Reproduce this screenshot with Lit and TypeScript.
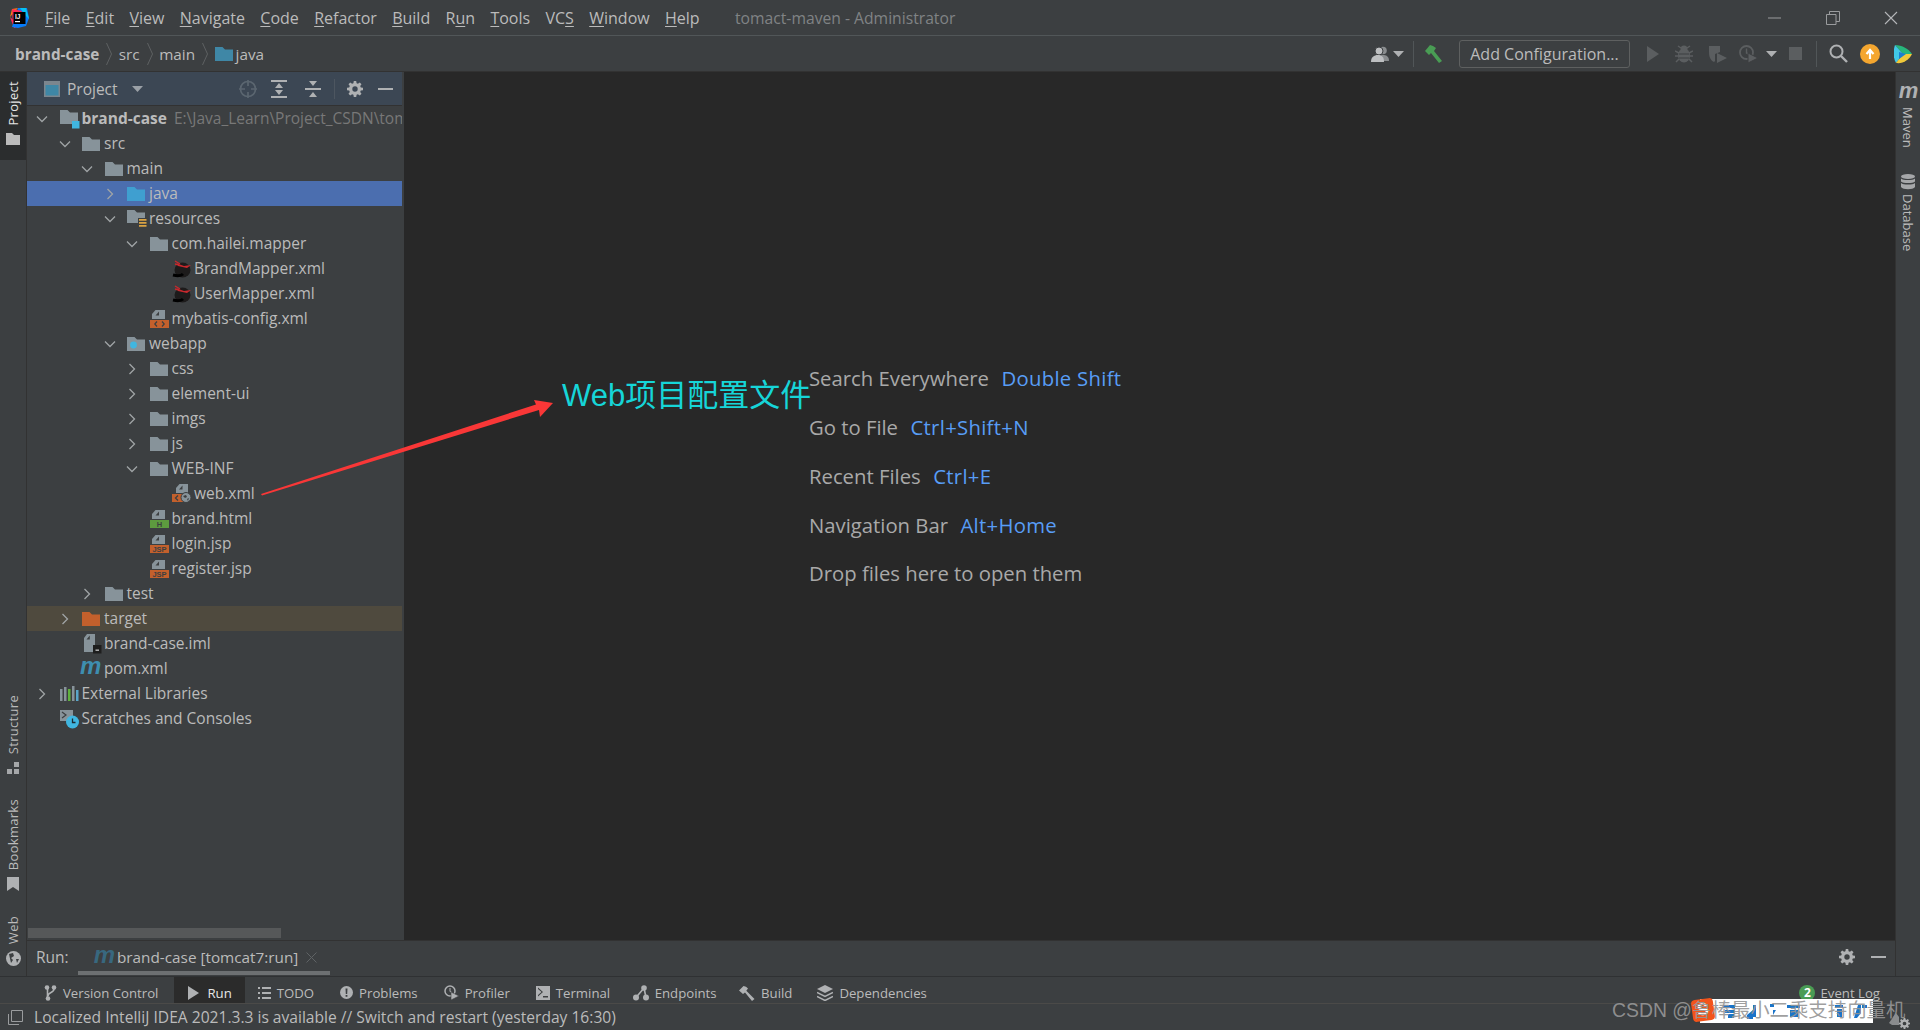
import { LitElement, html, svg, css } from "lit";
import { customElement } from "lit/decorators.js";

const svgBox = (w: number, h: number, body: any, cls = "") =>
  html`<svg class=${cls} width=${w} height=${h} viewBox="0 0 ${w} ${h}" xmlns="http://www.w3.org/2000/svg">${body}</svg>`;

const G = "#87939a";
const folder = (c = G) => html`<svg width="18" height="16" viewBox="0 0 18 16"><path d="M0 1h7.500l2.500 2.500h8V15H0z" fill=${c}/></svg>`;
const page = svg`<path d="M5.500 0H15v9H2V4z M9 1.500 5.500 5.500H9z" fill=${G} fill-rule="evenodd"/>`;
const badge = (c: string, t: string, tc = "#3c3f41") => html`<svg width="19" height="18" viewBox="0 0 19 18">${page}<rect x="0" y="10" width="19" height="8" fill=${c}/><text x="9.500" y="17" font-size="7.500" font-weight="700" text-anchor="middle" font-family="Liberation Sans" fill=${tc}>${t}</text></svg>`;

const icons: Record<string, any> = {
  module: html`<svg width="20" height="20" viewBox="0 0 20 20"><path d="M0 1h7.500l2.500 2.500h8V15H0z" fill=${G}/><rect x="12" y="12" width="7.500" height="7.500" fill="#40b6e0"/></svg>`,
  folder: folder(),
  java: folder("#3f9fd0"),
  target: folder("#c3602c"),
  resources: html`<svg width="20" height="20" viewBox="0 0 20 20"><path d="M0 1h7.500l2.500 2.500h8V14H0z" fill=${G}/><rect x="11" y="9" width="9" height="10" fill="#3c3f41"/><path d="M12 10h7.500v1.800H12zM12 13h7.500v1.800H12zM12 16h7.500v1.800H12z" fill="#d9a343"/></svg>`,
  webapp: html`<svg width="18" height="16" viewBox="0 0 18 16"><path d="M0 1h7.500l2.500 2.500h8V15H0z" fill=${G}/><circle cx="6.500" cy="9" r="3.400" fill="#40b6e0"/></svg>`,
  mybatis: html`<svg width="20" height="20" viewBox="0 0 20 20"><ellipse cx="10.500" cy="11" rx="8" ry="7.500" fill="#1d1b1b"/><path d="M1 16c4 1 8 1 10-1" stroke="#000" stroke-width="3" fill="none"/><path d="M5 4.500 12 7l7-1-4 3-9-2z" fill="#c9282d"/><path d="M3 2l5 3 M3 5l4 1" stroke="#c9282d" stroke-width="1.400"/></svg>`,
  xml: html`<svg width="19" height="18" viewBox="0 0 19 18">${page}<rect x="0" y="10" width="19" height="8" fill="#c3602c"/><path d="M7 11.500 4.800 14 7 16.500M12 11.500 14.200 14 12 16.500" stroke="#3c3f41" stroke-width="1.200" fill="none"/></svg>`,
  webxml: html`<svg width="20" height="19" viewBox="0 0 20 19"><path d="M7.500 0H16v9H4V4z M10.500 1.500 7 5.500h3.500z" fill=${G} fill-rule="evenodd"/><rect x="0" y="10" width="14" height="8" fill="#c3602c"/><path d="M6 11.500 3.500 14 6 16.500" stroke="#3c3f41" stroke-width="1.300" fill="none"/><circle cx="14" cy="13.500" r="5" fill="#87939a" stroke="#3c3f41" stroke-width="1"/><path d="M11 12l3-1 1 2-2 1zM15 15l2-1-1 3z" fill="#3c3f41"/></svg>`,
  html: badge("#5d9b3f", "H"),
  jsp: badge("#c3602c", "JSP"),
  iml: html`<svg width="20" height="20" viewBox="0 0 20 20"><path d="M5 0h8v18H2V4z M7.800 1.500 4.500 5.500h3.300z" fill=${G} fill-rule="evenodd"/><rect x="11" y="11" width="8.500" height="8.500" fill="#1e1e1e"/><rect x="13.500" y="15.500" width="3.500" height="1.400" fill="#bbb"/></svg>`,
  pom: html`<span class="mvn blue">m</span>`,
  libs: html`<svg width="19" height="16" viewBox="0 0 19 16"><path d="M0 3h2.500v12H0zM4 1h2.500v14H4zM12 0h2.500v15H12z" fill=${G}/><path d="M8 3h2.500v12H8z" fill="#5fb13e"/><path d="M16 4h2.500v11H16z" fill="#5aa6c9"/></svg>`,
  scratch: html`<svg width="20" height="20" viewBox="0 0 20 20"><path d="M0 1h13v11H0z" fill=${G}/><path d="M2 3l4 3-4 3" stroke="#3c3f41" stroke-width="1.200" fill="none"/><circle cx="12.500" cy="13" r="6.500" fill="#40b6e0"/><path d="M12.500 9.500V13.500H15.500" stroke="#1d2a30" stroke-width="1.300" fill="none"/></svg>`,
};

interface Node { d: number; i: string; t: string; c?: "o" | "c"; cls?: string; hint?: string; }
const tree: Node[] = [
  { d: 0, i: "module", t: "brand-case", c: "o", cls: "bold", hint: "E:\\Java_Learn\\Project_CSDN\\tomact-maven" },
  { d: 1, i: "folder", t: "src", c: "o" },
  { d: 2, i: "folder", t: "main", c: "o" },
  { d: 3, i: "java", t: "java", c: "c", cls: "sel" },
  { d: 3, i: "resources", t: "resources", c: "o" },
  { d: 4, i: "folder", t: "com.hailei.mapper", c: "o" },
  { d: 5, i: "mybatis", t: "BrandMapper.xml" },
  { d: 5, i: "mybatis", t: "UserMapper.xml" },
  { d: 4, i: "xml", t: "mybatis-config.xml" },
  { d: 3, i: "webapp", t: "webapp", c: "o" },
  { d: 4, i: "folder", t: "css", c: "c" },
  { d: 4, i: "folder", t: "element-ui", c: "c" },
  { d: 4, i: "folder", t: "imgs", c: "c" },
  { d: 4, i: "folder", t: "js", c: "c" },
  { d: 4, i: "folder", t: "WEB-INF", c: "o" },
  { d: 5, i: "webxml", t: "web.xml" },
  { d: 4, i: "html", t: "brand.html" },
  { d: 4, i: "jsp", t: "login.jsp" },
  { d: 4, i: "jsp", t: "register.jsp" },
  { d: 2, i: "folder", t: "test", c: "c" },
  { d: 1, i: "target", t: "target", c: "c", cls: "excl" },
  { d: 1, i: "iml", t: "brand-case.iml" },
  { d: 1, i: "pom", t: "pom.xml" },
  { d: 0, i: "libs", t: "External Libraries", c: "c" },
  { d: 0, i: "scratch", t: "Scratches and Consoles" },
];

const chevO = html`<svg width="12" height="12" viewBox="0 0 12 12"><path d="M1 3.500 6 8.500 11 3.500" stroke="#a0a4a6" stroke-width="1.300" fill="none"/></svg>`;
const chevC = html`<svg width="12" height="12" viewBox="0 0 12 12"><path d="M3.500 1 8.500 6 3.500 11" stroke="#a0a4a6" stroke-width="1.300" fill="none"/></svg>`;

const menus: [string, number][] = [["File", 0], ["Edit", 0], ["View", 0], ["Navigate", 0], ["Code", 0], ["Refactor", 0], ["Build", 0], ["Run", 1], ["Tools", 0], ["VCS", 2], ["Window", 0], ["Help", 0]];

const D = "#5b5e60";
const gear = (s: number, c = "#afb1b3") => html`<svg width=${s} height=${s} viewBox="0 0 16 16"><path d="M6.800 0h2.400l.4 2.200 1.300.6 1.900-1.300 1.700 1.700-1.300 1.900.6 1.300 2.200.4v2.400l-2.200.4-.6 1.300 1.300 1.900-1.700 1.700-1.900-1.300-1.300.6-.4 2.200H6.800l-.4-2.200-1.300-.6-1.900 1.300-1.700-1.700 1.300-1.900-.6-1.300L0 9.200V6.800l2.200-.4.6-1.300-1.300-1.900 1.700-1.700 1.900 1.300 1.300-.6zM8 5.300a2.700 2.700 0 1 0 0 5.400 2.700 2.700 0 0 0 0-5.400z" fill=${c} fill-rule="evenodd"/></svg>`;

const caret = html`<svg width="11" height="6" viewBox="0 0 11 6"><path d="M0 0h11L5.500 6z" fill="#afb1b3"/></svg>`;

const toolbar: { g: number; w: number; b: any }[] = [
  { g: 2, w: 19, b: html`<svg width="19" height="16" viewBox="0 0 19 16"><circle cx="12" cy="4.500" r="3.800" fill="#8a8d8f"/><path d="M7 15c0-5 2-6 5-6s6 1 6 6z" fill="#8a8d8f"/><circle cx="8" cy="5" r="4" fill="#bdbfc1" stroke="#3c3f41"/><path d="M0 16c0-5 3-7 7-7s6 2 6 7z" fill="#bdbfc1"/></svg>` },
  { g: 3, w: 11, b: caret },
  { g: 9, w: 1, b: html`<span class="sep"></span>` },
  { g: 10, w: 20, b: html`<svg width="20" height="20" viewBox="0 0 20 20"><path d="M1 7 6 1l3 1 3 2-2 3 8 10-3 2-8-10-2 2z" fill="#499c54"/></svg>` },
  { g: 15, w: 171, b: html`<span class="cfg">Add Configuration...</span>` },
  { g: 16, w: 14, b: html`<svg width="14" height="16" viewBox="0 0 14 16"><path d="M1 0 13 8 1 16z" fill=${D}/></svg>` },
  { g: 15, w: 18, b: html`<svg width="18" height="18" viewBox="0 0 18 18"><ellipse cx="9" cy="10.500" rx="6" ry="7" fill=${D}/><circle cx="9" cy="4" r="3.500" fill=${D}/><path d="M0 6l4 2M18 6l-4 2M0 11h4M18 11h-4M1 17l3-3M17 17l-3-3M3 1l3 2M15 1l-3 2" stroke=${D} stroke-width="1.500"/><path d="M4 9h10M4 13h10" stroke="#3c3f41" stroke-width="1.200"/></svg>` },
  { g: 15, w: 19, b: html`<svg width="19" height="18" viewBox="0 0 19 18"><path d="M1 1h11v6L7 9v7l-1 1C2 15 1 11 1 7z" fill=${D}/><path d="M9 8l10 5-10 5z" fill=${D}/></svg>` },
  { g: 12, w: 19, b: html`<svg width="19" height="18" viewBox="0 0 19 18"><circle cx="7.500" cy="7.500" r="6.500" fill="none" stroke=${D} stroke-width="1.800"/><path d="M7.500 3.500V8l3 1.500" stroke=${D} stroke-width="1.400" fill="none"/><path d="M9 8l10 5-10 5z" fill=${D} stroke="#3c3f41"/></svg>` },
  { g: 8, w: 11, b: caret },
  { g: 12, w: 13, b: html`<svg width="13" height="13" viewBox="0 0 13 13"><rect width="13" height="13" fill=${D}/></svg>` },
  { g: 14, w: 1, b: html`<span class="sep"></span>` },
  { g: 12, w: 19, b: html`<svg width="19" height="19" viewBox="0 0 19 19"><circle cx="7.500" cy="7.500" r="6" fill="none" stroke="#afb1b3" stroke-width="2"/><path d="M12 12l6 6" stroke="#afb1b3" stroke-width="2.400"/></svg>` },
  { g: 12, w: 20, b: html`<svg width="20" height="20" viewBox="0 0 20 20"><circle cx="10" cy="10" r="10" fill="#f4a62f"/><path d="M10 15V7M6.500 10 10 6l3.500 4" stroke="#fff" stroke-width="2.200" fill="none"/></svg>` },
  { g: 14, w: 19, b: html`<svg width="19" height="20" viewBox="0 0 19 20"><path d="M1 1C8 1 15 5 18 10L9 10z" fill="#27b67c"/><path d="M1 1C-1 7-1 13 2 19L9 10z" fill="#41c8e8"/><path d="M2 19c7 1 13-3 16-9H9z" fill="#f0c93a"/><path d="M5 8l7 2-7 5z" fill="#1c7fd0"/></svg>` },
];

const stripeTabs: { t: string; a?: boolean; m?: number; i: any }[] = [
  { t: "Version Control", m: 3, i: html`<svg width="13" height="16" viewBox="0 0 13 16"><circle cx="3" cy="2.500" r="2.300" fill="#afb1b3"/><circle cx="10" cy="2.500" r="2.300" fill="#afb1b3"/><circle cx="4" cy="13.500" r="2.300" fill="#afb1b3"/><path d="M3.500 3v9M10 4c0 4-6 3-6 7" stroke="#afb1b3" stroke-width="1.600" fill="none"/></svg>` },
  { t: "Run", a: true, i: html`<svg width="12" height="14" viewBox="0 0 12 14"><path d="M1 0 12 7 1 14z" fill="#afb1b3"/></svg>` },
  { t: "TODO", i: html`<svg width="13" height="12" viewBox="0 0 13 12"><path d="M0 0h2v2H0zM4 0h9v2H4zM0 5h2v2H0zM4 5h9v2H4zM0 10h2v2H0zM4 10h9v2H4z" fill="#afb1b3"/></svg>` },
  { t: "Problems", i: html`<svg width="13" height="13" viewBox="0 0 13 13"><circle cx="6.500" cy="6.500" r="6.500" fill="#afb1b3"/><path d="M5.500 2.500h2L7.200 8H5.800zM5.600 9h1.800v1.800H5.600z" fill="#3c3f41"/></svg>` },
  { t: "Profiler", i: html`<svg width="15" height="15" viewBox="0 0 15 15"><circle cx="6" cy="6" r="5" fill="none" stroke="#afb1b3" stroke-width="1.500"/><path d="M6 3v3.500l2 1" stroke="#afb1b3" fill="none"/><path d="M7 7l8 4-8 4z" fill="#afb1b3" stroke="#3c3f41" stroke-width=".6"/></svg>` },
  { t: "Terminal", m: -3.5, i: html`<svg width="14" height="14" viewBox="0 0 14 14"><path d="M0 0h14v14H0zM2 3l3.500 3L2 9v1.500L7 6 2 1.500zM7 10v1.500h5V10z" fill="#afb1b3" fill-rule="evenodd"/></svg>` },
  { t: "Endpoints", m: -3.5, i: html`<svg width="16" height="16" viewBox="0 0 16 16"><circle cx="11" cy="3" r="2.800" fill="#afb1b3"/><circle cx="3" cy="12.500" r="3" fill="#afb1b3"/><circle cx="13" cy="12.500" r="3" fill="#afb1b3"/><path d="M11 3 3 12.500M11 3l2 9.500" stroke="#afb1b3" stroke-width="1.600"/></svg>` },
  { t: "Build", m: -1, i: html`<svg width="16" height="16" viewBox="0 0 16 16"><path d="M0 5.500 4.500 1l2.500.7 2 1.800-1.700 2.300L15.500 14 13 16 6 7.500 4 9z" fill="#afb1b3"/></svg>` },
  { t: "Dependencies", i: html`<svg width="16" height="16" viewBox="0 0 16 16"><path d="M8 0l8 4-8 4-8-4z" fill="#afb1b3"/><path d="M0 7.500l8 4 8-4M0 11.500l8 4 8-4" stroke="#afb1b3" stroke-width="1.500" fill="none"/></svg>` },
];

const sepc = svg`<path d="M.500 1 5.500 12 .500 23" stroke="#5e6163" fill="none"/>`;

@customElement("app-root")
export class AppRoot extends LitElement {
  static styles = css`
    :host { display: block; width: 1920px; height: 1030px; position: relative; overflow: hidden; background: #3c3f41; color: #bbbbbb; font-family: "Open Sans", "Noto Sans CJK SC", sans-serif; font-size: 15.500px; }
    .app { display: flex; flex-direction: column; height: 1030px; }
    .title { height: 35px; flex: none; display: flex; align-items: center; border-bottom: 1px solid #515658; font-size: 16px; box-sizing: content-box; }
    .logo { margin-left: 10px; width: 34px; flex: none; display: flex; }
    .menu { padding: 0 0 0 1px; margin-right: 14.350px; color: #bbbbbb; white-space: nowrap; }
    .menu u { text-underline-offset: 2px; }
    .wtitle { margin-left: 21px; color: #808385; flex: 1; font-size: 15.700px; }
    .win { width: 58px; display: flex; justify-content: center; align-items: center; flex: none; }
    .nav { height: 35px; flex: none; display: flex; align-items: center; border-bottom: 1px solid #323232; }
    .crumbs { display: flex; align-items: center; padding-left: 15px; flex: 1; font-size: 15.300px; }
    .crumbs b { font-weight: 700; }
    .crumbs svg.sepc { margin: 0 6.500px 0 7px; }
    .crumbs .jf { margin-right: 3px; display: flex; }
    .tools { display: flex; align-items: center; width: 551px; flex: none; }
    .tb { display: flex; justify-content: center; align-items: center; flex: none; height: 28px; }
    .sep { display: block; width: 1px; height: 26px; background: #515658; }
    .cfg { box-sizing: border-box; width: 171px; height: 28px; border: 1px solid #5e6060; border-radius: 3px; display: flex; align-items: center; justify-content: center; white-space: nowrap; font-size: 16px; }
    .main { flex: 1; display: flex; min-height: 0; }
    .lstripe { width: 27px; flex: none; display: flex; flex-direction: column; align-items: center; border-right: 1px solid #323232; box-sizing: border-box; padding-bottom: 10px; gap: 25px; }
    .rstripe { width: 25px; flex: none; display: flex; flex-direction: column; align-items: center; border-left: 1px solid #323232; box-sizing: border-box; padding-top: 13px; gap: 26.500px; }
    .sbtn { display: flex; flex-direction: column; align-items: center; gap: 7px; width: 100%; color: #bbbbbb; font-size: 13px; }
    .rstripe .sbtn { gap: 4.500px; }
    .sbtn .v { writing-mode: vertical-rl; transform: rotate(180deg); letter-spacing: .3px; }
    .sbtn .vr { writing-mode: vertical-rl; }
    .sbtn.top { background: #2b2d2e; color: #e6e6e6; padding: 9px 0 7px; height: 88px; box-sizing: border-box; margin-bottom: -25px; }
    .spacer { flex: 1; }
    .center { flex: 1; display: flex; flex-direction: column; min-width: 0; }
    .upper { flex: 1; display: flex; min-height: 0; }
    .panel { width: 375px; flex: none; display: flex; flex-direction: column; overflow: hidden; position: relative; }
    .phead { height: 33px; flex: none; background: #3c4754; display: flex; align-items: center; border-bottom: 1px solid #323232; padding-left: 17px; }
    .phead .pt { margin-left: 7px; flex: none; }
    .phead .pc { margin-left: 14px; display: flex; }
    .ph-i { display: flex; flex: none; }
    .ph-locate { margin-left: 96px; }
    .ph-expand { margin-left: 14px; }
    .ph-collapse { margin-left: 18px; }
    .ph-sep { width: 1px; height: 20px; background: #4d5660; margin-left: 13px; }
    .ph-gear { margin-left: 12px; }
    .ph-min { margin-left: 15px; }
    .tree { flex: 1; min-height: 0; white-space: nowrap; }
    .row { height: 25px; display: flex; align-items: center; box-sizing: border-box; }
    .row > span:not(.chev):not(.ico) { margin-top: -2px; }
    .row.sel { background: #4b6eaf; }
    .row.excl { background: #4f4a3e; }
    .chev { width: 23.500px; flex: none; display: flex; }
    .ico { width: 22px; flex: none; display: flex; align-items: center; }
    .row .bold { font-weight: 700; }
    .hint { color: #787878; margin-left: 7px; }
    .mvn { font: italic 700 24px/1 "Liberation Sans", sans-serif; display: block; margin-top: -5px; letter-spacing: -1px; }
    .mvn.blue { color: #3e8eb0; margin-left: -2px; }
    .mvn.grey { color: #afb1b3; font-size: 22px; }
    .mvn.dim { color: #38687f; font-size: 24px; }
    .hbar { height: 10px; width: 253px; margin: 0 0 2px 1px; background: #565859; flex: none; }
    .editor { flex: 1; background: #282828; margin-left: 2px; box-sizing: border-box; padding-top: 282px; padding-left: 405px; font-size: 20.300px; color: #a9a9a9; white-space: nowrap; }
    .wl { height: 48.800px; display: flex; align-items: center; gap: 12.500px; line-height: 1; }
    .wl a { color: #589df6; letter-spacing: .3px; }
    .runbar { height: 36px; flex: none; border-top: 1px solid #323232; display: flex; align-items: center; box-sizing: border-box; position: relative; padding: 0 0 3px 9px; }
    .runbar .lab { margin-right: 9px; }
    .rtab { height: 33px; margin-bottom: -3px; display: flex; align-items: center; gap: 3px; padding: 0 13px 3px 16px; position: relative; font-size: 15.300px; box-sizing: border-box; }
    .rtab svg { margin-left: 5px; }
    .rtab::after { content: ""; position: absolute; left: 0; right: 0; bottom: 0; height: 4px; background: #6d7072; }
    .rgear { margin-left: auto; display: flex; margin-right: 16px; margin-bottom: 1px; }
    .rmin { width: 15px; height: 2px; background: #afb1b3; margin-right: 9px; margin-bottom: 1px; }
    .bstripe { height: 28px; flex: none; border-top: 1px solid #2f3133; border-bottom: 1px solid #4b4a48; display: flex; align-items: stretch; padding-left: 31px; font-size: 13.200px; box-sizing: border-box; }
    .bt { display: flex; align-items: center; gap: 6px; padding: 5px 13px 0; white-space: nowrap; }
    .bt.a { background: #2b2b2b; color: #e6e6e6; gap: 8px; padding-top: 5px; }
    .evt { margin-left: auto; margin-right: 40px; display: flex; align-items: center; gap: 5px; padding-top: 5px; }
    .num { width: 16px; height: 16px; border-radius: 50%; background: #499c54; color: #fff; font-size: 12px; font-weight: 700; display: flex; align-items: center; justify-content: center; }
    .status { height: 26px; flex: none; display: flex; align-items: center; font-size: 15.600px; padding-left: 8px; gap: 11px; white-space: nowrap; }
    .arrow { position: absolute; left: 0; top: 0; pointer-events: none; }
    .anno { position: absolute; left: 562px; top: 375px; color: #16d5d8; font: 31px/42px "Liberation Sans", "Noto Sans CJK SC", sans-serif; white-space: nowrap; }
    .ime { position: absolute; left: 1700px; top: 999px; width: 173px; height: 24px; background: #fff; }
    .ime svg { display: block; }
    .sg { position: absolute; left: 1692px; top: 999px; width: 22px; height: 22px; background: #f2541b; border-radius: 4px; transform: rotate(-8deg); color: #fff; font: 700 17px/22px "Liberation Sans", sans-serif; text-align: center; }
    .wm { position: absolute; left: 1612px; top: 997px; font: 19.400px/27px "Liberation Sans", "Noto Sans CJK SC", sans-serif; color: rgba(150,150,150,.92); white-space: nowrap; }
    .fgear { position: absolute; left: 1889px; top: 1009px; display: flex; align-items: flex-end; }
  `;

  render() {
    return html`<div class="app">
      <div class="title">
        <div class="logo"><svg width="19" height="20" viewBox="0 0 19 20"><path d="M2 1 8 0l-8 9z" fill="#f97a12"/><path d="M0 9 4 20l6-2z" fill="#fe2857"/><path d="M8 0h9l2 10-3 8-8 2-6-1z" fill="#087cfa"/><path d="M10 0h6l3 11-4-4z" fill="#07c3f2"/><path d="M2 1 12 3 3 15z" fill="#fe2857"/><rect x="3.500" y="4" width="12" height="12" fill="#000"/><text x="5" y="10.500" font-size="6.500" font-weight="700" font-family="Liberation Sans" fill="#fff">IJ</text><rect x="5" y="13" width="5" height="1.200" fill="#fff"/></svg></div>
        ${menus.map(([m, u]) => html`<span class="menu">${m.slice(0, u)}<u>${m[u]}</u>${m.slice(u + 1)}</span>`)}
        <span class="wtitle">tomact-maven - Administrator</span>
        <span class="win">${svgBox(14, 14, svg`<path d="M0 7h13" stroke="#9a9c9e" stroke-width="1"/>`)}</span>
        <span class="win">${svgBox(14, 14, svg`<path d="M.500 3.500h9.500v10H.500zM3.500 3.500V.500h10v10H10" stroke="#9a9c9e" fill="none"/>`)}</span>
        <span class="win">${svgBox(14, 14, svg`<path d="M1 1l12 12M13 1 1 13" stroke="#b5b7b9" stroke-width="1.100"/>`)}</span>
      </div>
      <div class="nav">
        <div class="crumbs">
          <b>brand-case</b>
          ${svgBox(6, 24, sepc, "sepc")}
          <span>src</span>
          ${svgBox(6, 24, sepc, "sepc")}
          <span>main</span>
          ${svgBox(6, 24, sepc, "sepc")}
          <span class="jf">${folder("#3f87a6")}</span><span>java</span>
        </div>
        <div class="tools">
          ${toolbar.map((t) => html`<span class="tb" style="margin-left:${t.g}px;width:${t.w}px">${t.b}</span>`)}
        </div>
      </div>
      <div class="main">
        <div class="lstripe">
          <div class="sbtn top"><span class="v">Project</span>${svgBox(14, 12, svg`<path d="M0 0h6l2 2h6v10H0z" fill="#bbb"/>`)}</div>
          <div class="spacer"></div>
          <div class="sbtn"><span class="v">Structure</span>${svgBox(12, 12, svg`<path d="M7 0h5v5H7zM0 7h5v5H0zM7 7h5v5H7z" fill="#a5a7a9"/>`)}</div>
          <div class="sbtn"><span class="v">Bookmarks</span>${svgBox(12, 14, svg`<path d="M0 0h12v14L6 10 0 14z" fill="#afb1b3"/>`)}</div>
          <div class="sbtn"><span class="v">Web</span>${svgBox(15, 15, svg`<circle cx="7.500" cy="7.500" r="7.500" fill="#afb1b3"/><path d="M3 3l4-1 1 3-3 2 2 2-2 3zM10 8l3 0-2 4z" fill="#3c3f41"/>`)}</div>
        </div>
        <div class="center">
          <div class="upper">
            <div class="panel">
              <div class="phead">
                <span class="ph-i">${svgBox(16, 16, svg`<rect width="16" height="16" fill="#7c868e"/><rect x="1.500" y="4" width="13" height="10.500" fill="#3f87a6"/>`)}</span>
                <span class="pt">Project</span>
                <span class="pc">${svgBox(11, 6, svg`<path d="M0 0h11L5.500 6z" fill="#9aa0a6"/>`)}</span>
                <span class="ph-i ph-locate">${svgBox(18, 18, svg`<circle cx="9" cy="9" r="7.500" fill="none" stroke="#5b6670" stroke-width="1.700"/><path d="M9 0v6M9 12v6M0 9h6M12 9h6" stroke="#5b6670" stroke-width="1.700"/>`)}</span>
                <span class="ph-i ph-expand">${svgBox(16, 18, svg`<path d="M0 1h16M0 17h16" stroke="#afb1b3" stroke-width="2"/><path d="M8 3l4 5H4zM8 15l-4-5h8z" fill="#afb1b3"/>`)}</span>
                <span class="ph-i ph-collapse">${svgBox(16, 18, svg`<path d="M0 9h16" stroke="#afb1b3" stroke-width="2"/><path d="M4 1h8L8 6zM4 17h8l-4-5z" fill="#afb1b3"/>`)}</span>
                <span class="ph-sep"></span>
                <span class="ph-i ph-gear">${gear(16)}</span>
                <span class="ph-i ph-min"><svg width="15" height="2"><rect width="15" height="2" fill="#afb1b3"/></svg></span>
              </div>
              <div class="tree">
                ${tree.map((n) => html`<div class="row ${n.cls === "sel" || n.cls === "excl" ? n.cls : ""}" style="padding-left:${9 + n.d * 22.5}px">
                  <span class="chev">${n.c === "o" ? chevO : n.c === "c" ? chevC : ""}</span>
                  <span class="ico">${icons[n.i]}</span>
                  <span class=${n.cls === "bold" ? "bold" : ""}>${n.t}</span>${n.hint ? html`<span class="hint">${n.hint}</span>` : ""}
                </div>`)}
              </div>
              <div class="hbar"></div>
            </div>
            <div class="editor">
              <div class="wl"><span>Search Everywhere</span><a>Double Shift</a></div>
              <div class="wl"><span>Go to File</span><a>Ctrl+Shift+N</a></div>
              <div class="wl"><span>Recent Files</span><a>Ctrl+E</a></div>
              <div class="wl"><span>Navigation Bar</span><a>Alt+Home</a></div>
              <div class="wl"><span>Drop files here to open them</span></div>
            </div>
          </div>
          <div class="runbar">
            <span class="lab">Run:</span>
            <div class="rtab"><span class="mvn dim">m</span><span>brand-case [tomcat7:run]</span>${svgBox(11, 11, svg`<path d="M.500 .500l10 10M10.500 .500l-10 10" stroke="#5f6365"/>`)}</div>
            <span class="rgear">${gear(16)}</span>
            <span class="rmin"></span>
          </div>
        </div>
        <div class="rstripe">
          <div class="sbtn"><span class="mvn grey">m</span><span class="vr">Maven</span></div>
          <div class="sbtn">${svgBox(14, 16, svg`<ellipse cx="7" cy="2.500" rx="7" ry="2.500" fill="#a5a7a9"/><path d="M0 4.500c2 2 12 2 14 0v3c-2 2-12 2-14 0zM0 9c2 2 12 2 14 0v4c-2 3-12 3-14 0z" fill="#a5a7a9"/>`)}<span class="vr">Database</span></div>
        </div>
      </div>
      <div class="bstripe">
        ${stripeTabs.map((t) => html`<div class="bt ${t.a ? "a" : ""}" style="margin-right:${t.m ?? 0}px">${t.i}<span>${t.t}</span></div>`)}
        <div class="evt"><span class="num">2</span><span>Event Log</span></div>
      </div>
      <div class="status">
        ${svgBox(15, 15, svg`<path d="M3.500 .500h11v11h-11zM.500 4v10.500H11" stroke="#9a9c9e" fill="none"/>`)}
        <span>Localized IntelliJ IDEA 2021.3.3 is available // Switch and restart (yesterday 16:30)</span>
      </div>
    </div>
    <svg class="arrow" width="1920" height="1030"><polygon points="261,494 262,495.500 539,410 540,417 553,403 534,400 536,404.500" fill="#f93737"/></svg>
    <div class="anno">Web项目配置文件</div>
    <div class="ime"><svg width="173" height="24" viewBox="0 0 173 24"><path d="M23 6h12v3H23zM25 11h10v3H25zM28 15h6v4h-6zM47 16l6-5v9h-6zM53 6h3v12h-3zM70 5h4v3h-4zM73 11h3l-3 5zM87 6h13v3H87zM90 11h8v7h-8zM135 6h8v3h-8zM137 10h5v8h-5zM158 6h3v8l-4 5h-3zM162 6h5v3h-5z" fill="#1a74c9"/></svg></div>
    <div class="sg">S</div>
    <div class="wm">CSDN @鲁棒最小二乘支持向量机</div>
    <div class="fgear">${svgBox(10, 20, svg`<path d="M0 14 7 4l3 4v8H3z" fill="#8a8c8e"/>`)}${gear(11)}</div>
    `;
  }
}
